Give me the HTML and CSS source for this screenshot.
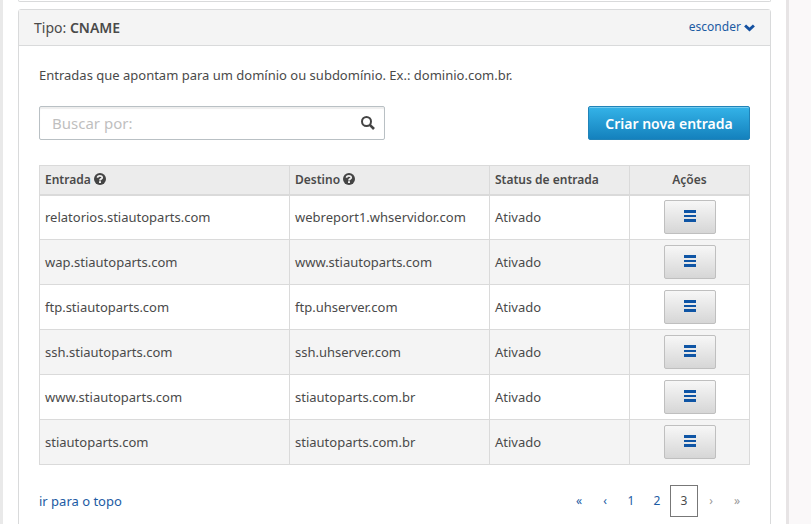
FILE: index.html
```html
<!DOCTYPE html>
<html lang="pt-BR">
<head>
    <meta charset="UTF-8">
    <meta name="viewport" content="width=device-width, initial-scale=1.0">
    <title>Entradas DNS - CNAME</title>
    <link rel="stylesheet" href="styles.css">
</head>
<body>

    <!-- Ícones usados na página -->
    <svg class="sprite" aria-hidden="true">
        <symbol id="icon-help" viewBox="0 0 12 12">
            <circle cx="6" cy="6" r="6" fill="#444"/>
            <path d="M3.6 4.8C3.6 2.2 8.2 2.2 8.2 4.7C8.2 6 6 5.8 6 7.4" fill="none" stroke="#eee" stroke-width="1.8"/>
            <rect x="5" y="8.2" width="2" height="1.8" fill="#eee"/>
        </symbol>
        <symbol id="icon-menu" viewBox="0 0 12 12">
            <path d="M0 0h12v3H0zM0 5h12v2H0zM0 9h12v3H0z" fill="#0f55a5"/>
        </symbol>
    </svg>

    <main class="sheet" id="topo">
        <section class="panel panel-closed"></section>

        <section class="panel">
            <header class="panel-header">
                <h2 class="panel-title">Tipo: <strong>CNAME</strong></h2>
                <a class="toggle" href="#">esconder
                    <svg class="chevron" viewBox="0 0 10 7" aria-hidden="true"><path d="M1 1.2L5 5L9 1.2" fill="none" stroke="#1350a0" stroke-width="2.6"/></svg>
                </a>
            </header>

            <div class="panel-body">
                <p class="description">Entradas que apontam para um domínio ou subdomínio. Ex.: dominio.com.br.</p>

                <div class="toolbar">
                    <form class="search">
                        <input class="search-input" type="text" placeholder="Buscar por:" aria-label="Buscar por">
                        <button class="search-button" type="submit" aria-label="Buscar">
                            <svg width="14" height="14" viewBox="0 0 14 14" aria-hidden="true"><circle cx="5.5" cy="5.5" r="4.5" fill="none" stroke="#444" stroke-width="2"/><path d="M8.8 8.8L13 13" stroke="#444" stroke-width="2.6"/></svg>
                        </button>
                    </form>
                    <button class="create-button" type="button">Criar nova entrada</button>
                </div>

                <table class="entries">
                    <colgroup>
                        <col class="col-entry">
                        <col class="col-target">
                        <col class="col-status">
                        <col class="col-actions">
                    </colgroup>
                    <thead>
                        <tr>
                            <th>Entrada <svg class="help" aria-hidden="true"><use href="#icon-help"/></svg></th>
                            <th>Destino <svg class="help" aria-hidden="true"><use href="#icon-help"/></svg></th>
                            <th>Status de entrada</th>
                            <th class="actions">Ações</th>
                        </tr>
                    </thead>
                    <tbody>
                        <tr>
                            <td>relatorios.stiautoparts.com</td>
                            <td>webreport1.whservidor.com</td>
                            <td>Ativado</td>
                            <td class="actions"><button class="menu-button" type="button" aria-label="Ações"><svg class="menu-icon"><use href="#icon-menu"/></svg></button></td>
                        </tr>
                        <tr>
                            <td>wap.stiautoparts.com</td>
                            <td>www.stiautoparts.com</td>
                            <td>Ativado</td>
                            <td class="actions"><button class="menu-button" type="button" aria-label="Ações"><svg class="menu-icon"><use href="#icon-menu"/></svg></button></td>
                        </tr>
                        <tr>
                            <td>ftp.stiautoparts.com</td>
                            <td>ftp.uhserver.com</td>
                            <td>Ativado</td>
                            <td class="actions"><button class="menu-button" type="button" aria-label="Ações"><svg class="menu-icon"><use href="#icon-menu"/></svg></button></td>
                        </tr>
                        <tr>
                            <td>ssh.stiautoparts.com</td>
                            <td>ssh.uhserver.com</td>
                            <td>Ativado</td>
                            <td class="actions"><button class="menu-button" type="button" aria-label="Ações"><svg class="menu-icon"><use href="#icon-menu"/></svg></button></td>
                        </tr>
                        <tr>
                            <td>www.stiautoparts.com</td>
                            <td>stiautoparts.com.br</td>
                            <td>Ativado</td>
                            <td class="actions"><button class="menu-button" type="button" aria-label="Ações"><svg class="menu-icon"><use href="#icon-menu"/></svg></button></td>
                        </tr>
                        <tr>
                            <td>stiautoparts.com</td>
                            <td>stiautoparts.com.br</td>
                            <td>Ativado</td>
                            <td class="actions"><button class="menu-button" type="button" aria-label="Ações"><svg class="menu-icon"><use href="#icon-menu"/></svg></button></td>
                        </tr>
                    </tbody>
                </table>

                <footer class="panel-footer">
                    <a href="#topo">ir para o topo</a>
                    <nav class="pagination" aria-label="Paginação">
                        <a class="page" href="#">«</a>
                        <a class="page" href="#">‹</a>
                        <a class="page" href="#">1</a>
                        <a class="page" href="#">2</a>
                        <span class="page current">3</span>
                        <span class="page disabled">›</span>
                        <span class="page disabled">»</span>
                    </nav>
                </footer>
            </div>
        </section>
    </main>

</body>
</html>
```

FILE: styles.css
```css
* {
    box-sizing: border-box;
}

body {
    margin: 0;
    background-color: #faf8f9;
    color: #4a4a4a;
    font-family: "Noto Sans", "Open Sans", sans-serif;
    font-size: 13px;
    line-height: 18px;
}

a {
    color: #1c5ba3;
    text-decoration: none;
}

a:hover {
    text-decoration: underline;
}

button,
input {
    font-family: inherit;
}

button {
    cursor: pointer;
}

.sprite {
    display: none;
}

.sheet {
    height: 100vh;
    margin-right: 22px;
    padding: 0 15px;
    overflow: hidden;
    background-color: #fff;
    border-left: 3px solid #e9e9e9;
    border-right: 3px solid #e7e4e5;
}

.panel {
    background-color: #fff;
    border: 1px solid #d9dadb;
    border-radius: 3px;
}

.panel-closed {
    height: 2px;
    margin-bottom: 7px;
    border-top: 0;
    border-radius: 0 0 3px 3px;
}

.panel-header {
    display: flex;
    align-items: center;
    justify-content: space-between;
    height: 36px;
    padding: 0 15px;
    background-color: #f4f4f4;
    border-bottom: 1px solid #d9dadb;
}

.panel-title {
    margin: 0;
    font-size: 14px;
    font-weight: normal;
}

.panel-title strong {
    font-weight: 600;
}

.toggle {
    font-size: 12px;
    padding-bottom: 2px;
}

.chevron {
    width: 11px;
    height: 8px;
    vertical-align: -1px;
}

.panel-body {
    padding: 20px;
}

.description {
    margin: 0 0 22px;
}

.toolbar {
    display: flex;
    justify-content: space-between;
    margin-bottom: 25px;
}

.search {
    display: flex;
    width: 346px;
    height: 34px;
    border: 1px solid #b9c0c4;
    border-radius: 2px;
    box-shadow: inset 0 2px 1px #eee;
}

.search-input {
    flex: 1;
    min-width: 0;
    padding: 0 12px;
    border: 0;
    background: none;
    font-size: 15px;
}

.search-input::placeholder {
    color: #bfbfbf;
}

.search-button {
    display: flex;
    align-items: center;
    padding: 0 9px;
    border: 0;
    background: none;
}

.create-button {
    width: 162px;
    height: 34px;
    padding: 0;
    border: 1px solid #2183b8;
    border-radius: 2px;
    background: linear-gradient(#34b3e8, #1481bd);
    box-shadow: inset 0 1px 0 #72cbf0;
    color: #fff;
    font-size: 14px;
    font-weight: 600;
}

.entries {
    width: 100%;
    table-layout: fixed;
    border-collapse: collapse;
}

.col-entry {
    width: 250px;
}

.col-target {
    width: 200px;
}

.col-status {
    width: 140px;
}

.col-actions {
    width: 120px;
}

.entries th,
.entries td {
    padding: 0 5px;
    border: 1px solid #dadada;
    text-align: left;
}

.entries th {
    height: 29px;
    background-color: #ececec;
    border-bottom-width: 2px;
    font-size: 12px;
    font-weight: 600;
}

.entries td {
    height: 45px;
}

.entries tbody tr:nth-child(even) {
    background-color: #f4f4f4;
}

.entries .actions {
    text-align: center;
}

.help {
    width: 12px;
    height: 12px;
    vertical-align: -1px;
}

.menu-button {
    display: flex;
    align-items: center;
    justify-content: center;
    width: 52px;
    height: 34px;
    margin: 0 auto;
    padding: 0 0 2px;
    border: 1px solid #bfbfbf;
    border-radius: 2px;
    background: linear-gradient(#f7f7f7, #d6d6d6);
}

.menu-icon {
    width: 12px;
    height: 12px;
}

.panel-footer {
    display: flex;
    align-items: center;
    justify-content: space-between;
    margin-top: 20px;
}

.pagination {
    display: flex;
    align-items: center;
}

.page {
    width: 26px;
    font-size: 12px;
    text-align: center;
}

.current {
    width: 28px;
    padding: 6px 0;
    border: 1px solid #777;
}

.disabled {
    color: #999;
}
```
